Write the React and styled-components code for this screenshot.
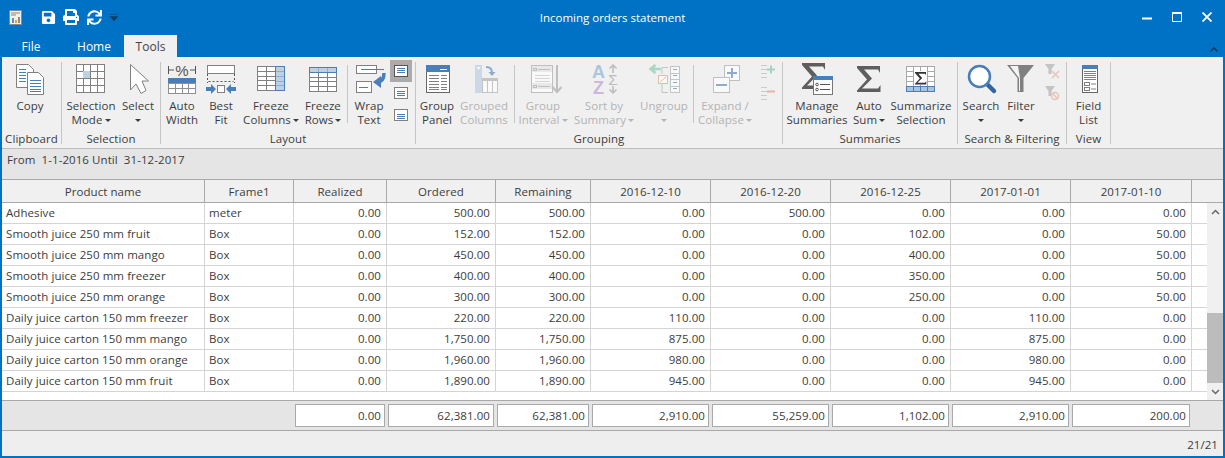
import React from 'react'
import styled, { createGlobalStyle } from 'styled-components'
import { FaSave, FaPrint, FaSync } from 'react-icons/fa'

const BLUE = '#4a7eb8'
const GRAY = '#808080'

const GlobalStyle = createGlobalStyle`
  html, body { margin: 0; padding: 0; background: #0072c6; }
  * { box-sizing: border-box; }
  body { font-family: "Open Sans", "Liberation Sans", sans-serif; font-size: 11.5px; letter-spacing: 0.07px; color: #3c3c3c; }
`

const Window = styled.div`
  width: 1225px;
  height: 458px;
  background: #0072c6;
  padding: 0 2px 2px;
  display: flex;
  flex-direction: column;
  overflow: hidden;
`
const TitleBar = styled.div`
  height: 34px;
  margin: 0 -2px;
  display: grid;
  grid-template-columns: 1fr auto 1fr;
  align-items: center;
  color: #fff;
  font-size: 11.5px;
  letter-spacing: 0;
`
const QuickAccess = styled.div`
  display: flex;
  align-items: center;
  padding-left: 9px;
`
const QuickSep = styled.div`
  width: 1px;
  height: 14px;
  background: #1b5f94;
  margin: 0 7px 0 11px;
`
const QuickButton = styled.div`
  width: ${(p) => p.$w}px;
  display: flex;
  color: #fff;
`
const WindowControls = styled.div`
  display: flex;
  justify-content: flex-end;
  padding-right: 13px;
  gap: 20px;
`
const TabRow = styled.div`
  height: 23px;
  display: flex;
  align-items: flex-end;
  color: #fff;
  position: relative;
  font-size: 12px;
  letter-spacing: 0;
`
const Tab = styled.div`
  width: ${(p) => p.$w}px;
  margin-left: ${(p) => p.$ml || 0}px;
  height: 22px;
  display: flex;
  align-items: center;
  justify-content: center;
  background: ${(p) => (p.$active ? '#f0f0f0' : 'transparent')};
  color: ${(p) => (p.$active ? '#444' : '#fff')};
`
const Collapse = styled.svg`
  margin-left: auto;
  margin-right: 5px;
  margin-bottom: 5px;
`
const Ribbon = styled.div`
  height: 92px;
  background: #f0f0f0;
  border-bottom: 1px solid #bdbdbd;
  padding-top: 5px;
  display: flex;
  align-items: flex-start;
`
const Group = styled.div`
  width: ${(p) => p.$w}px;
  height: 82px;
  border-right: 1px solid #c6c6c6;
  display: flex;
  flex-direction: column;
`
const GroupRow = styled.div`
  height: 69px;
  padding-top: 1px;
  padding-left: ${(p) => p.$pl || 0}px;
  display: flex;
  align-items: flex-start;
`
const GroupLabel = styled.div`
  height: 12px;
  line-height: 16px;
  text-align: center;
  white-space: nowrap;
`
const RibbonButton = styled.div`
  width: ${(p) => p.$w}px;
  flex: none;
  display: flex;
  flex-direction: column;
  align-items: center;
  color: ${(p) => (p.$off ? '#b3b3b3' : '#3c3c3c')};
  line-height: 14px;
  white-space: nowrap;
  > svg { overflow: visible; margin-bottom: 4px; flex: none; opacity: ${(p) => (p.$off ? 0.6 : 1)}; }
`
const Caret = styled.span`
  display: inline-block;
  width: 0;
  height: 0;
  margin-left: ${(p) => (p.$solo ? 0 : 2)}px;
  vertical-align: middle;
  border-left: 3px solid transparent;
  border-right: 3px solid transparent;
  border-top: 3px solid ${(p) => (p.$off ? '#b3b3b3' : '#3c3c3c')};
`
const InnerSep = styled.div`
  width: 1px;
  height: 58px;
  margin-top: 2px;
  margin-left: ${(p) => p.$ml || 0}px;
  background: #c6c6c6;
  flex: none;
`
const SmallColumn = styled.div`
  width: 22px;
  margin-top: -3px;
  margin-left: ${(p) => p.$ml || 0}px;
  flex: none;
  display: flex;
  flex-direction: column;
`
const SmallButton = styled.div`
  height: 22px;
  display: flex;
  align-items: center;
  justify-content: center;
  background: ${(p) => (p.$active ? '#ababab' : 'transparent')};
  > svg { opacity: ${(p) => (p.$off ? 0.5 : 1)}; }
`
const FilterBar = styled.div`
  height: 31px;
  background: #e5e5e5;
  border-bottom: 1px solid #a9a9a9;
  padding: 4px 5px;
  line-height: 14px;
  white-space: pre;
`
const COLS = '203px 89px 93px 109px 95px 120px 120px 120px 120px 121px'
const HeaderRow = styled.div`
  height: 23px;
  display: grid;
  grid-template-columns: ${COLS} 1fr;
  background: #f0f0f0;
  border-bottom: 1px solid #a9a9a9;
`
const HeaderCell = styled.div`
  border-right: 1px solid #a9a9a9;
  line-height: 24px;
  text-align: center;
  &:last-child { border-right: 0; }
`
const GridBody = styled.div`
  height: 197px;
  display: flex;
  background: #fff;
`
const Rows = styled.div`
  flex: 1;
`
const Row = styled.div`
  height: 21px;
  display: grid;
  grid-template-columns: ${COLS} 1fr;
  border-bottom: 1px solid #d4d4d4;
`
const Cell = styled.div`
  border-right: 1px solid #d4d4d4;
  line-height: 20px;
  padding: ${(p) => (p.$num ? '0 5px 0 0' : '0 0 0 4px')};
  text-align: ${(p) => (p.$num ? 'right' : 'left')};
  white-space: nowrap;
  &:last-child { border-right: 0; }
`
const ScrollBar = styled.div`
  width: 16px;
  background: #f0f0f0;
  display: flex;
  flex-direction: column;
`
const ScrollArrow = styled.div`
  height: 17px;
  display: flex;
  align-items: center;
  justify-content: center;
`
const ScrollTrack = styled.div`
  flex: 1;
  display: flex;
  flex-direction: column;
  justify-content: flex-end;
`
const ScrollThumb = styled.div`
  height: 70px;
  background: #bcbcbc;
`
const Footer = styled.div`
  height: 31px;
  background: #e5e5e5;
  border-top: 1px solid #a9a9a9;
  border-bottom: 1px solid #a9a9a9;
  display: grid;
  grid-template-columns: ${COLS} 1fr;
  align-items: center;
`
const FooterCell = styled.div`
  height: 23px;
  margin: 0 2px 0 1px;
  grid-column: ${(p) => p.$col};
  background: #fff;
  border: 1px solid #a9a9a9;
  line-height: 21px;
  padding-right: 3px;
  text-align: right;
`
const StatusBar = styled.div`
  height: 25px;
  background: #eeeeee;
  padding-right: 5px;
  line-height: 27px;
  text-align: right;
`

// ribbon drawings, 32x32 with the slot top as y=0
const Ico = ({ children, s = 32 }) => (
  <svg width={s} height={s} viewBox={`0 0 ${s} ${s}`} fill="none">
    {children}
  </svg>
)
const Lines = ({ x1, x2, ys, c = BLUE }) => ys.map((y) => <path key={y} d={`M${x1} ${y + 0.5}H${x2}`} stroke={c} />)

const GridLines = ({ x, y, w, h, cols, rows, c = GRAY }) => {
  const out = []
  for (let i = 1; i < cols; i++) out.push(<path key={'c' + i} d={`M${x + Math.round((w * i) / cols)} ${y}V${y + h}`} stroke={c} />)
  for (let i = 1; i < rows; i++) out.push(<path key={'r' + i} d={`M${x} ${y + Math.round((h * i) / rows)}H${x + w}`} stroke={c} />)
  return (
    <>
      <rect x={x} y={y} width={w} height={h} fill="#fff" stroke={c} />
      {out}
    </>
  )
}

const CopyIcon = () => (
  <Ico>
    <path d="M2.5 1.5H14.5L19.5 6.5V24.5H2.5Z" fill="#fff" stroke={GRAY} />
    <Lines x1={5} x2={12} ys={[6, 9, 12, 15, 18]} />
    <path d="M13.5 9.5H24.5L29.5 14.5V31.5H13.5Z" fill="#fff" stroke={GRAY} />
    <Lines x1={16} x2={27} ys={[17, 20, 23, 26, 28]} />
  </Ico>
)
const SelectionIcon = () => (
  <Ico>
    <GridLines x={1.5} y={1.5} w={28} h={28} cols={4} rows={4} />
    <rect x={8} y={8} width={7} height={7} fill="#bdd0e4" />
  </Ico>
)
const CursorIcon = () => (
  <Ico>
    <path d="M8.5 1.5V27L14 21L19 30.5L24 27.5L20 18H26.5Z" fill="#fff" stroke={GRAY} />
  </Ico>
)
const AutoWidthIcon = () => (
  <Ico>
    <path d="M2.5 3V11M2.500 7H8M24 7H29.500M29.500 3V11" stroke="#555" />
    <text x="16" y="12.500" fontSize="15" textAnchor="middle" fill="#555" fontFamily="Liberation Sans">%</text>
    <rect x="2" y="15" width="28" height="5" fill={BLUE} />
    <GridLines x={2.5} y={20.5} w={27} h={10} cols={4} rows={2} c="#909090" />
  </Ico>
)
const BestFitIcon = () => (
  <Ico>
    <rect x="2.5" y="2.5" width="27" height="8" fill="#fff" stroke={GRAY} />
    <path d="M2.5 11V20M29.5 11V20" stroke="#555" strokeDasharray="2 2" />
    <path d="M3.5 18.5H28.5" stroke="#555" strokeDasharray="2 2" />
    <rect x="12.5" y="22.5" width="7" height="7" fill="#fff" stroke={GRAY} />
    <path d="M1 24H6V21L11 26L6 31V28H1ZM31 24H26V21L21 26L26 31V28H31Z" fill={BLUE} />
  </Ico>
)
const FreezeColumnsIcon = () => (
  <Ico>
    <GridLines x={2.5} y={3.5} w={27} h={24} cols={3} rows={5} />
    <rect x="20.5" y="3.5" width="9" height="24" fill="#bdd0e4" stroke={BLUE} />
    <Lines x1={21} x2={29} ys={[8, 13, 18, 22]} c="#8fb0d0" />
  </Ico>
)
const FreezeRowsIcon = () => (
  <Ico>
    <GridLines x={2.5} y={4.5} w={27} h={24} cols={3} rows={5} />
    <rect x="2.5" y="4.5" width="27" height="5" fill="#bdd0e4" stroke={BLUE} />
    <path d="M11.500 5V9M20.500 5V9" stroke="#8fb0d0" />
  </Ico>
)
const WrapIcon = () => (
  <Ico>
    <rect x="3.5" y="2.5" width="20" height="8" fill="#fff" stroke={GRAY} />
    <path d="M8 6.5H31" stroke={BLUE} />
    <rect x="3.5" y="18.5" width="15" height="11" fill="#fff" stroke={GRAY} />
    <path d="M6 24.5H15" stroke={BLUE} />
    <path d="M31 10C31 16.500 28.500 19 24 19" stroke={BLUE} strokeWidth="3.500" />
    <path d="M28 13L20 19L28 25Z" fill={BLUE} />
  </Ico>
)
const AlignIcon = ({ ys, dark }) => (
  <Ico s={16}>
    <rect x="1.5" y="2.5" width="13" height="11" fill="#fff" stroke={dark ? '#555' : GRAY} />
    <Lines x1={4} x2={12} ys={ys} />
  </Ico>
)
const GroupPanelIcon = () => (
  <Ico>
    <rect x="5.5" y="2.5" width="23" height="27" fill="#fff" stroke="#666" />
    <rect x="5" y="2" width="24" height="7" fill={BLUE} />
    <path d="M19 6.5H26" stroke="#fff" />
    <Lines x1={8} x2={18} ys={[12, 15, 18, 21, 24, 26]} c={GRAY} />
    <Lines x1={20} x2={26} ys={[12, 15, 18, 21, 24, 26]} c={GRAY} />
  </Ico>
)
const GroupedColumnsIcon = () => (
  <Ico>
    <rect x="7" y="2" width="7" height="28" fill="#b4c9df" />
    <path d="M8.500 4H12.500L10.500 7Z" fill="#fff" />
    <GridLines x={14.5} y={16.5} w={15} h={13} cols={3} rows={1} c="#a8a8a8" />
    <rect x="14" y="15" width="16" height="3" fill="#a8a8a8" />
    <path d="M18 4C22 4 24 6 24 10" stroke={BLUE} strokeWidth="2" />
    <path d="M20.500 9H27.500L24 13Z" fill={BLUE} />
  </Ico>
)
const GroupIntervalIcon = () => (
  <Ico>
    <rect x="4.5" y="2.500" width="21" height="27" fill="#fff" stroke="#a0a0a0" />
    <rect x="5" y="3" width="20" height="6" fill="#e4e4e4" />
    <rect x="5" y="20" width="20" height="6" fill="#e4e4e4" />
    <rect x="6.500" y="5.500" width="3" height="2" stroke="#a0a0a0" />
    <rect x="6.500" y="22.500" width="3" height="2" stroke="#a0a0a0" />
    <path d="M11 6.500H23M11 23.500H23" stroke="#a0a0a0" />
    <Lines x1={8} x2={23} ys={[12, 15, 18]} c="#c4c4c4" />
    <path d="M30 2V28M25.500 24L30 29L34.500 24" stroke="#a0a0a0" strokeWidth="2" />
  </Ico>
)
const SortSummaryIcon = () => (
  <Ico>
    <text x="10.500" y="15" fontSize="18" fontWeight="700" textAnchor="middle" fill="#7fa9d2" fontFamily="Liberation Sans">A</text>
    <text x="10.500" y="31" fontSize="18" fontWeight="700" textAnchor="middle" fill="#b394cf" fontFamily="Liberation Sans">Z</text>
    <text x="25" y="22" fontSize="15" textAnchor="middle" fill="#999" fontFamily="Liberation Sans">Σ</text>
    <path d="M25 10V2M21.500 5.500L25 2L28.500 5.500M25 23V30M21.500 26.500L25 30L28.500 26.500" stroke="#999" strokeWidth="1.500" />
  </Ico>
)
const UngroupIcon = () => (
  <Ico>
    <path d="M13 6H3M7.500 2L2.500 6L7.500 10" stroke="#7fc4a5" strokeWidth="2.500" />
    <path d="M14 4.500H20M14 4.500V11M14 21V29.500H20" stroke="#a8a8a8" />
    <rect x="10.500" y="12.500" width="9" height="8" fill="#fff" stroke="#e8957c" />
    <path d="M12 19L18 14" stroke="#e8957c" />
    <GridLines x={22.500} y={3.500} w={9} h={26} cols={1} rows={4} c="#a8a8a8" />
    <Lines x1={25} x2={29} ys={[6, 12, 19, 25]} c={BLUE} />
  </Ico>
)
const ExpandIcon = () => (
  <Ico>
    <rect x="15.500" y="2.500" width="15" height="15" fill="#fff" stroke="#a0a0a0" />
    <path d="M23 5V15M18 10H28" stroke={BLUE} strokeWidth="2" />
    <rect x="4.500" y="14.500" width="16" height="15" fill="#fff" stroke="#a0a0a0" />
    <path d="M7 22H18" stroke={BLUE} strokeWidth="2" />
  </Ico>
)
const TreeIcon = ({ c, plus }) => (
  <Ico s={16}>
    <Lines x1={1} x2={7} ys={[2, 6, 10, 14]} c="#a8a8a8" />
    <path d={plus ? 'M7 6.500H15M11 2.500V10.500' : 'M7 6.500H15'} stroke={c} strokeWidth="2" />
  </Ico>
)
// heavy upper stroke, thin lower stroke, as in the reference
const Sigma = ({ x = 0, y = 0, s = 1, c = '#5e5e5e' }) => (
  <path
    transform={`translate(${x} ${y}) scale(${s})`}
    d="M0 0H23V7L21 3.500H7L15 12.500L5 22.500H21L23.500 19V26H0V24.500L10 13.500L0 2Z"
    fill={c}
  />
)
const ManageSummariesIcon = () => (
  <Ico>
    <Sigma x={1} y={0} />
    <rect x="12.500" y="14.500" width="19" height="17" fill="#fff" stroke="#777" />
    <rect x="12" y="13" width="20" height="4" fill={BLUE} />
    <circle cx="16" cy="21.500" r="1.300" stroke="#555" />
    <circle cx="16" cy="26.500" r="1.300" stroke="#555" />
    <path d="M19 21.500H29M19 26.500H29" stroke="#555" />
  </Ico>
)
const AutoSumIcon = () => (
  <Ico>
    <Sigma x={4} y={3} />
  </Ico>
)
const SummarizeIcon = () => (
  <Ico>
    <GridLines x={1.500} y={3.500} w={28} h={25} cols={4} rows={5} c="#a8a8a8" />
    <rect x="1.500" y="23.500" width="28" height="5" fill="#a9c4de" stroke={BLUE} />
    <path d="M8.500 23.500V28.500M15.500 23.500V28.500M22.500 23.500V28.500" stroke={BLUE} />
    <rect x="9" y="8" width="13" height="14" fill="#fff" />
    <Sigma x={10} y={9} s={0.48} c="#333" />
  </Ico>
)
const SearchIcon = () => (
  <Ico>
    <path d="M22 21L29 28" stroke="#33669c" strokeWidth="4.500" strokeLinecap="round" />
    <circle cx="14.500" cy="13.500" r="10.500" fill="#fff" stroke={BLUE} strokeWidth="2.500" />
  </Ico>
)
const FilterIcon = () => (
  <Ico>
    <path d="M2 2H29L18.500 15V29H12.500V15Z" fill="#808080" />
    <path d="M5 3H13L15 15V28H14V15Z" fill="#fff" opacity="0.9" />
  </Ico>
)
const SmallFilter = ({ slash }) => (
  <Ico s={16}>
    <path d="M1 1H11L7.500 6V11H4.500V6Z" fill="#9a9a9a" />
    {slash ? (
      <>
        <circle cx="11" cy="11" r="3.500" stroke="#e29a86" strokeWidth="1.500" />
        <path d="M8.500 8.500L13.500 13.500" stroke="#e29a86" strokeWidth="1.500" />
      </>
    ) : (
      <path d="M8 8L15 15M15 8L8 15" stroke="#e29a86" strokeWidth="1.500" />
    )}
  </Ico>
)
const FieldListIcon = () => (
  <Ico>
    <rect x="9.500" y="2.500" width="15" height="27" fill="#fff" stroke="#666" />
    <rect x="9" y="2" width="16" height="4" fill={BLUE} />
    <Lines x1={11} x2={23} ys={[8, 10, 12, 14, 16]} c={GRAY} />
    <rect x="11.500" y="19.500" width="5" height="3" stroke={GRAY} />
    <rect x="11.500" y="24.500" width="5" height="3" stroke={GRAY} />
    <path d="M18 21H23M18 26H23" stroke={GRAY} />
  </Ico>
)

const Btn = ({ w, off, icon, line1, line2, caret, solo }) => (
  <RibbonButton $w={w} $off={off}>
    {icon}
    <div>{line1}</div>
    <div>
      {line2}
      {caret && <Caret $off={off} $solo={solo} />}
    </div>
  </RibbonButton>
)

const rows = [
  ['Adhesive', 'meter', '0.00', '500.00', '500.00', '0.00', '500.00', '0.00', '0.00', '0.00'],
  ['Smooth juice 250 mm fruit', 'Box', '0.00', '152.00', '152.00', '0.00', '0.00', '102.00', '0.00', '50.00'],
  ['Smooth juice 250 mm mango', 'Box', '0.00', '450.00', '450.00', '0.00', '0.00', '400.00', '0.00', '50.00'],
  ['Smooth juice 250 mm freezer', 'Box', '0.00', '400.00', '400.00', '0.00', '0.00', '350.00', '0.00', '50.00'],
  ['Smooth juice 250 mm orange', 'Box', '0.00', '300.00', '300.00', '0.00', '0.00', '250.00', '0.00', '50.00'],
  ['Daily juice carton 150 mm freezer', 'Box', '0.00', '220.00', '220.00', '110.00', '0.00', '0.00', '110.00', '0.00'],
  ['Daily juice carton 150 mm mango', 'Box', '0.00', '1,750.00', '1,750.00', '875.00', '0.00', '0.00', '875.00', '0.00'],
  ['Daily juice carton 150 mm orange', 'Box', '0.00', '1,960.00', '1,960.00', '980.00', '0.00', '0.00', '980.00', '0.00'],
  ['Daily juice carton 150 mm fruit', 'Box', '0.00', '1,890.00', '1,890.00', '945.00', '0.00', '0.00', '945.00', '0.00'],
]
const columns = ['Product name', 'Frame1', 'Realized', 'Ordered', 'Remaining', '2016-12-10', '2016-12-20', '2016-12-25', '2017-01-01', '2017-01-10']
const totals = ['0.00', '62,381.00', '62,381.00', '2,910.00', '55,259.00', '1,102.00', '2,910.00', '200.00']

export default function App() {
  return (
    <Window>
      <GlobalStyle />
      <TitleBar>
        <QuickAccess>
          <svg width="13" height="15" viewBox="0 0 13 15">
            <rect x="0.500" y="0.500" width="12" height="14" fill="#f4f0e8" stroke="#8a8a8a" />
            <path d="M2 3H11M2 5H7" stroke="#888" />
            <path d="M3 8H5V13H3Z" fill="#6a8fb5" />
            <path d="M6 10H8V13H6Z" fill="#d9a441" />
            <path d="M9 7H11V13H9Z" fill="#8a8a8a" />
          </svg>
          <QuickSep />
          <QuickButton $w={22}><FaSave size={15} /></QuickButton>
          <QuickButton $w={24}><FaPrint size={16} /></QuickButton>
          <QuickButton $w={23}><FaSync size={15} /></QuickButton>
          <svg width="8" height="7" viewBox="0 0 8 7">
            <path d="M0 0.500H8M0 2.500H8L4 7Z" fill="#123f66" stroke="#123f66" strokeWidth="0.500" />
          </svg>
        </QuickAccess>
        <div>Incoming orders statement</div>
        <WindowControls>
          <svg width="10" height="10" viewBox="0 0 10 10"><path d="M0 6.500H10" stroke="#fff" strokeWidth="2" /></svg>
          <svg width="10" height="10" viewBox="0 0 10 10"><path d="M0.500 1V9.500H9.500V1Z" fill="none" stroke="#fff" /><path d="M0 1H10" stroke="#fff" strokeWidth="2" /></svg>
          <svg width="10" height="10" viewBox="0 0 10 10"><path d="M0.500 0.500L9.500 9.500M9.500 0.500L0.500 9.500" stroke="#fff" strokeWidth="1.800" /></svg>
        </WindowControls>
      </TitleBar>
      <TabRow>
        <Tab $w={58}>File</Tab>
        <Tab $w={60} $ml={4}>Home</Tab>
        <Tab $w={53} $active>Tools</Tab>
        <Collapse width="8" height="5" viewBox="0 0 8 5">
          <path d="M0.500 4.500L4 1L7.500 4.500" fill="none" stroke="#0d3f6b" strokeWidth="1.600" />
        </Collapse>
      </TabRow>
      <Ribbon>
        <Group $w={60}>
          <GroupRow>
            <Btn w={56} icon={<CopyIcon />} line1="Copy" />
          </GroupRow>
          <GroupLabel>Clipboard</GroupLabel>
        </Group>
        <Group $w={99}>
          <GroupRow $pl={1}>
            <Btn w={56} icon={<SelectionIcon />} line1="Selection" line2="Mode" caret />
            <Btn w={38} icon={<CursorIcon />} line1="Select" caret solo />
          </GroupRow>
          <GroupLabel>Selection</GroupLabel>
        </Group>
        <Group $w={255}>
          <GroupRow $pl={3}>
            <Btn w={36} icon={<AutoWidthIcon />} line1="Auto" line2="Width" />
            <Btn w={42} icon={<BestFitIcon />} line1="Best" line2="Fit" />
            <Btn w={58} icon={<FreezeColumnsIcon />} line1="Freeze" line2="Columns" caret />
            <Btn w={46} icon={<FreezeRowsIcon />} line1="Freeze" line2="Rows" caret />
            <InnerSep $ml={1} />
            <Btn w={42} icon={<WrapIcon />} line1="Wrap" line2="Text" />
            <SmallColumn>
              <SmallButton $active><AlignIcon ys={[5, 7, 9]} dark /></SmallButton>
              <SmallButton><AlignIcon ys={[6, 8, 10]} /></SmallButton>
              <SmallButton><AlignIcon ys={[7, 9, 11]} /></SmallButton>
            </SmallColumn>
          </GroupRow>
          <GroupLabel>Layout</GroupLabel>
        </Group>
        <Group $w={367}>
          <GroupRow>
            <Btn w={42} icon={<GroupPanelIcon />} line1="Group" line2="Panel" />
            <Btn w={52} off icon={<GroupedColumnsIcon />} line1="Grouped" line2="Columns" />
            <InnerSep $ml={4} />
            <Btn w={56} off icon={<GroupIntervalIcon />} line1="Group" line2="Interval" caret />
            <Btn w={66} off icon={<SortSummaryIcon />} line1="Sort by" line2="Summary" caret />
            <Btn w={54} off icon={<UngroupIcon />} line1="Ungroup" caret solo />
            <InnerSep $ml={2} />
            <Btn w={62} off icon={<ExpandIcon />} line1="Expand /" line2="Collapse" caret />
            <SmallColumn $ml={1}>
              <SmallButton $off><TreeIcon c="#5fb88f" plus /></SmallButton>
              <SmallButton $off><TreeIcon c="#e2765a" /></SmallButton>
            </SmallColumn>
          </GroupRow>
          <GroupLabel>Grouping</GroupLabel>
        </Group>
        <Group $w={175}>
          <GroupRow $pl={4}>
            <Btn w={60} icon={<ManageSummariesIcon />} line1="Manage" line2="Summaries" />
            <Btn w={44} icon={<AutoSumIcon />} line1="Auto" line2="Sum" caret />
            <Btn w={60} icon={<SummarizeIcon />} line1="Summarize" line2="Selection" />
          </GroupRow>
          <GroupLabel>Summaries</GroupLabel>
        </Group>
        <Group $w={109}>
          <GroupRow>
            <Btn w={46} icon={<SearchIcon />} line1="Search" caret solo />
            <Btn w={34} icon={<FilterIcon />} line1="Filter" caret solo />
            <SmallColumn $ml={3}>
              <SmallButton $off><SmallFilter /></SmallButton>
              <SmallButton $off><SmallFilter slash /></SmallButton>
            </SmallColumn>
          </GroupRow>
          <GroupLabel>Search &amp; Filtering</GroupLabel>
        </Group>
        <Group $w={44}>
          <GroupRow>
            <Btn w={43} icon={<FieldListIcon />} line1="Field" line2="List" />
          </GroupRow>
          <GroupLabel>View</GroupLabel>
        </Group>
      </Ribbon>
      <FilterBar>From  1-1-2016 Until  31-12-2017</FilterBar>
      <HeaderRow>
        {columns.map((c) => (
          <HeaderCell key={c}>{c}</HeaderCell>
        ))}
        <HeaderCell />
      </HeaderRow>
      <GridBody>
        <Rows>
          {rows.map((r) => (
            <Row key={r[0]}>
              {r.map((v, i) => (
                <Cell key={i} $num={i > 1}>{v}</Cell>
              ))}
              <Cell />
            </Row>
          ))}
        </Rows>
        <ScrollBar>
          <ScrollArrow>
            <svg width="9" height="6" viewBox="0 0 9 6"><path d="M1 5L4.500 1.500L8 5" fill="none" stroke="#666" strokeWidth="1.500" /></svg>
          </ScrollArrow>
          <ScrollTrack><ScrollThumb /></ScrollTrack>
          <ScrollArrow>
            <svg width="9" height="6" viewBox="0 0 9 6"><path d="M1 1L4.500 4.500L8 1" fill="none" stroke="#666" strokeWidth="1.500" /></svg>
          </ScrollArrow>
        </ScrollBar>
      </GridBody>
      <Footer>
        {totals.map((t, i) => (
          <FooterCell key={i} $col={i + 3}>{t}</FooterCell>
        ))}
      </Footer>
      <StatusBar>21/21</StatusBar>
    </Window>
  )
}
